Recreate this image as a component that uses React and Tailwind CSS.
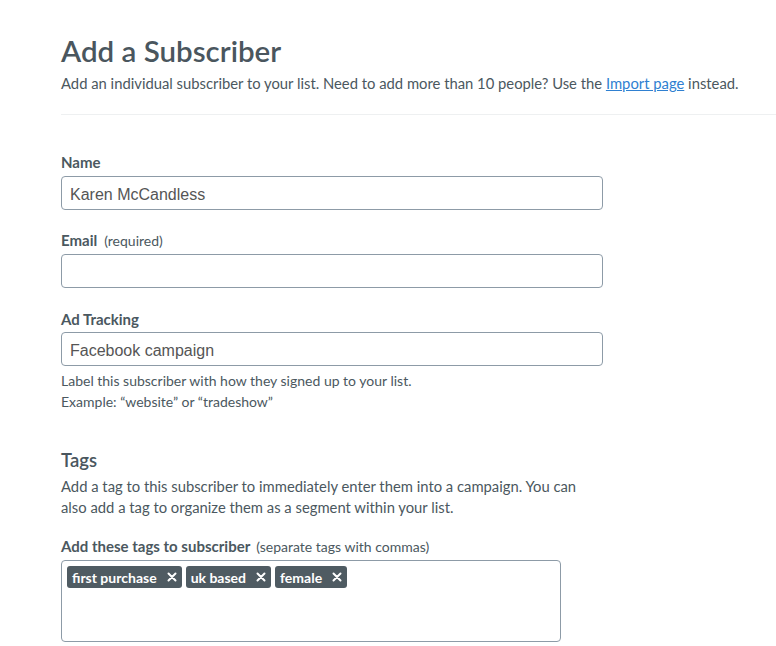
export default function App() {
  return (
    <div className="min-h-[646px] w-[776px] bg-white text-[#4b5860] font-['Lato',sans-serif]">
      <div className="pl-[61px] pt-[32px]">
        <h1 className="text-[29.5px] leading-[38px] font-semibold text-[#4a565e]">Add a Subscriber</h1>
        <p className="mt-[3px] text-[14.8px] leading-[20px] text-[#4b5860]">
          Add an individual subscriber to your list. Need to add more than 10 people? Use the{' '}
          <a href="#" className="text-[#2f80d1] underline">Import page</a> instead.
        </p>
        <div className="mt-[21px] h-px bg-[#eef0f1]" />
        <div className="w-[542px] pt-[38px]">
          <div className="text-[15px] leading-[18px] font-bold text-[#4b5860]">Name</div>
          <div className="mt-[5px] flex h-[34px] items-center rounded-[4px] border border-[#8d9ba7] px-[8px] pt-[3px] font-['Liberation_Sans',sans-serif] text-[16px] text-[#555]">Karen McCandless</div>

          <div className="mt-[21px] flex items-baseline gap-[7px]">
            <span className="text-[15px] leading-[18px] font-bold">Email</span>
            <span className="text-[14px] leading-[18px]">(required)</span>
          </div>
          <div className="mt-[4px] h-[34px] rounded-[4px] border border-[#8d9ba7]" />

          <div className="mt-[22px] text-[15px] leading-[18px] font-bold">Ad Tracking</div>
          <div className="mt-[4px] flex h-[34px] items-center rounded-[4px] border border-[#8d9ba7] px-[8px] pt-[3px] font-['Liberation_Sans',sans-serif] text-[16px] text-[#555]">Facebook campaign</div>
          <div className="mt-[4px] text-[14px] leading-[21px]">
            <div>Label this subscriber with how they signed up to your list.</div>
            <div>Example: “website” or “tradeshow”</div>
          </div>

          <h2 className="mt-[36px] text-[18.5px] leading-[24px] font-semibold text-[#4a565e]">Tags</h2>
          <p className="mt-[4px] w-[530px] text-[14.8px] leading-[21px]">
            Add a tag to this subscriber to immediately enter them into a campaign. You can also add a tag to organize them as a segment within your list.
          </p>
          <div className="mt-[19px] flex items-baseline gap-[6px]">
            <span className="text-[15px] leading-[18px] font-bold">Add these tags to subscriber</span>
            <span className="text-[14px] leading-[18px]">(separate tags with commas)</span>
          </div>
          <div className="mt-[4px] flex h-[82px] w-[500px] flex-wrap content-start gap-[4px] rounded-[4px] border border-[#8d9ba7] px-[5px] py-[5px]">
            {['first purchase', 'uk based', 'female'].map((t) => (
              <span key={t} className="flex h-[22px] items-center gap-[10px] rounded-[3px] bg-[#4f5b62] pl-[5px] pr-[5px] text-[14px] font-bold text-white">
                {t}
                <svg width="10" height="10" viewBox="0 0 10 10"><path d="M1.5 1.5 L8.5 8.5 M8.5 1.5 L1.5 8.5" stroke="white" strokeWidth="2" strokeLinecap="round" /></svg>
              </span>
            ))}
          </div>
        </div>
      </div>
    </div>
  );
}
